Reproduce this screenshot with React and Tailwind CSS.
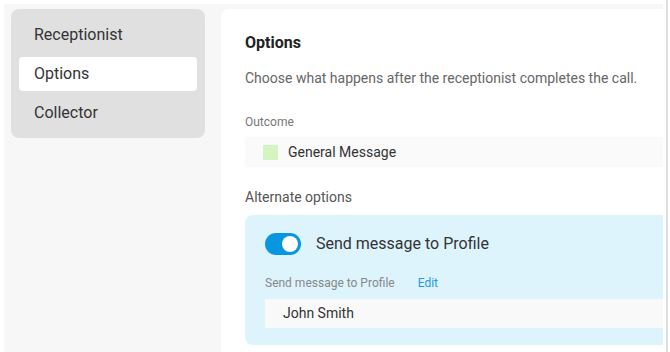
import { useState } from "react";

const menu = ["Receptionist", "Options", "Collector"];

export default function App() {
  const [active, setActive] = useState("Options");
  const [sendToProfile, setSendToProfile] = useState(true);

  return (
    <div
      className="flex h-[352px] w-[670px] bg-white pt-[4px] pl-[4px]"
      style={{ fontFamily: "Roboto, 'Noto Sans', sans-serif" }}
    >
      <div className="flex h-[348px] w-[659px] shrink-0 overflow-hidden bg-[#f7f7f7] pt-[5px] pl-[7px]">
        {/* Sidebar */}
        <div className="flex h-[129px] w-[194px] shrink-0 flex-col gap-[5px] rounded-lg bg-[#e0e0e0] px-2 pt-[9px]">
          {menu.map((item) => (
            <button
              key={item}
              onClick={() => setActive(item)}
              className={`flex h-[34px] items-center rounded px-[15px] text-left text-[16px] text-[#333] ${
                active === item ? "bg-white" : ""
              }`}
            >
              {item}
            </button>
          ))}
        </div>

        {/* Main panel */}
        <div className="ml-4 w-[560px] shrink-0 rounded-tl-lg bg-white pl-6 pt-[25px]">
          <h2 className="text-[16px] leading-[18px] font-bold text-[#222]">
            Options
          </h2>
          <p className="mt-[17px] text-[14px] leading-[18px] text-[#666]">
            Choose what happens after the receptionist completes the call.
          </p>

          <p className="mt-[28px] text-[12px] leading-[14px] text-[#777]">
            Outcome
          </p>
          <div className="mt-[8px] flex h-[30px] items-center gap-[10px] bg-[#fafafa] pl-[18px]">
            <span className="h-[15px] w-[15px] bg-[#d2f5c1]" />
            <span className="text-[14px] text-[#333]">General Message</span>
          </div>

          <p className="mt-[21px] text-[14px] leading-[18px] text-[#555]">
            Alternate options
          </p>
          <div className="mt-[9px] rounded-lg bg-[#ddf4fd] pt-[17px] pb-[17px] pl-5">
            <div className="flex items-center gap-[15px]">
              <button
                onClick={() => setSendToProfile(!sendToProfile)}
                className={`flex h-[22px] w-[36px] items-center rounded-full px-[3px] ${
                  sendToProfile
                    ? "justify-end bg-[#0996e0]"
                    : "justify-start bg-[#bbb]"
                }`}
              >
                <span className="h-[16px] w-[16px] rounded-full bg-white" />
              </button>
              <span className="text-[16px] text-[#333]">
                Send message to Profile
              </span>
            </div>
            <div className="mt-[20px] flex items-center text-[12px] leading-[14px]">
              <span className="text-[#888]">Send message to Profile</span>
              <span className="ml-[23px] text-[#1a9be6]">Edit</span>
            </div>
            <div className="mt-[9px] flex h-[29px] items-center bg-[#f9f9f9] pl-[18px] text-[14px] text-[#333]">
              John Smith
            </div>
          </div>
        </div>
      </div>
      <div className="ml-[3px] h-[352px] w-[2px] -mt-[4px] bg-[#dedede]" />
    </div>
  );
}
